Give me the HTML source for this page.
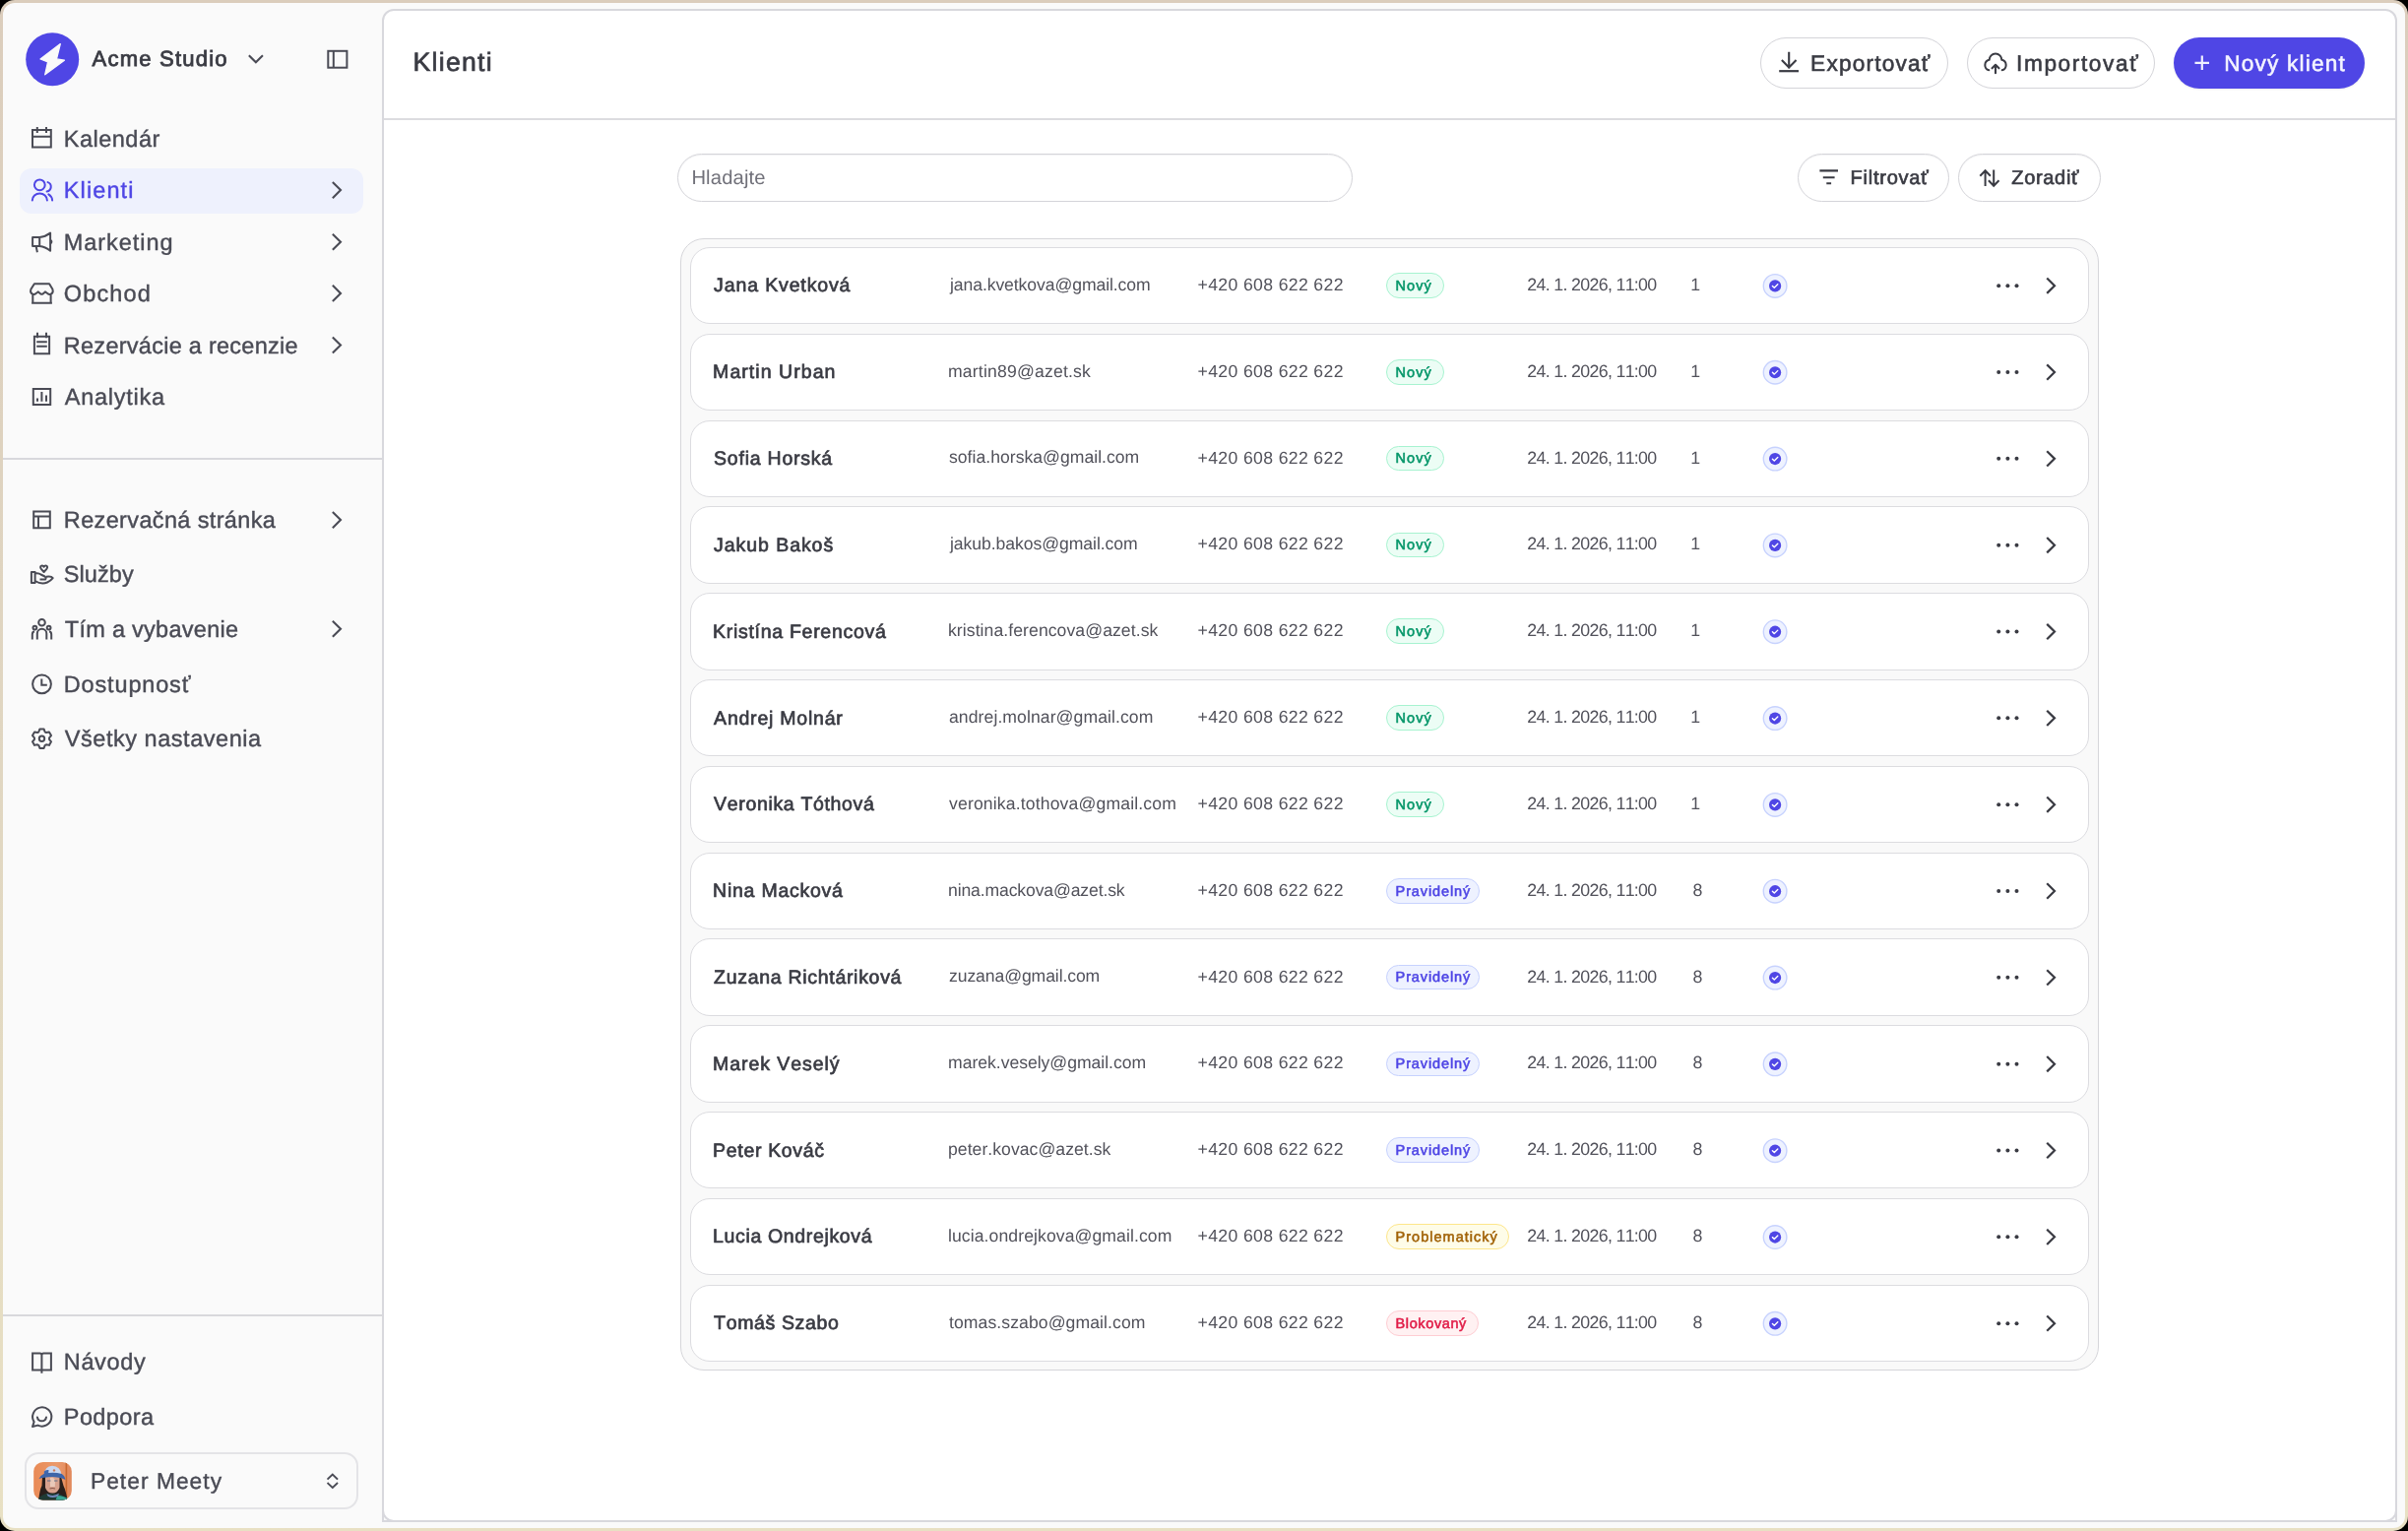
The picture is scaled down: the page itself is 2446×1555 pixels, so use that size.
<!DOCTYPE html>
<html><head><meta charset="utf-8">
<style>
*{box-sizing:border-box;margin:0;padding:0}
html,body{width:2446px;height:1555px;overflow:hidden;background:#000;font-family:"Liberation Sans",sans-serif;text-rendering:geometricPrecision}
.wrap{position:absolute;left:0;top:0;width:2446px;height:1555px;will-change:transform}
.frame{position:absolute;left:0;top:0;width:2446px;height:1555px;border-radius:15px;background:linear-gradient(180deg,#dbcdbc 0%,#e0d6c1 50%,#e8e0c3 100%)}
.app{position:absolute;left:3px;top:3px;width:2440px;height:1549px;border-radius:12px;background:#fafafa}
.t{position:absolute;white-space:nowrap;font-kerning:none}
.b{position:absolute}
svg{position:absolute;overflow:visible}
.nav{font-size:23.5px;line-height:23.5px;letter-spacing:0.27px;color:#4a4b55;-webkit-text-stroke:0.25px currentColor}
</style></head>
<body><div class="wrap">
<div class="frame"></div><div class="app"></div>
<svg style="left:26px;top:33px;" width="54" height="54" viewBox="26 33 54 54"><circle cx="53.2" cy="60.2" r="27" fill="#4f46e5"/><path d="M61.3 44.6 L57.5 59.9 L65.4 61.2 L45.7 75.8 L48.6 62.9 L41 60 Z" fill="#fafafa" stroke="#fafafa" stroke-width="1.3" stroke-linejoin="round"/></svg>
<div class="t" style="left:93.50px;top:49.40px;font-size:22.09px;line-height:22.09px;letter-spacing:1.191px;color:#3a3b43;font-weight:400;-webkit-text-stroke:0.8px #3a3b43">Acme Studio</div>
<svg style="left:250px;top:52px;" width="20" height="16" viewBox="250 52 20 16"><path d="M253.6 57 L259.9 63.3 L266.2 57" fill="none" stroke="#4a4b55" stroke-width="2.1" stroke-linecap="square" stroke-linejoin="miter"/></svg>
<svg style="left:330px;top:48px;" width="26" height="24" viewBox="330 48 26 24"><rect x="333.3" y="51.8" width="19.1" height="16.9" fill="none" stroke="#4a4b55" stroke-width="2" /><line x1="338.8" y1="52" x2="338.8" y2="68.5" fill="none" stroke="#4a4b55" stroke-width="2"/></svg>
<div class="b" style="left:20px;top:171px;width:349px;height:46px;background:#eef1fd;border-radius:12px"></div>
<div class="t" style="left:64.80px;top:130.31px;font-size:23.50px;line-height:23.50px;letter-spacing:0.494px;color:#4a4b55;font-weight:400;-webkit-text-stroke:0.4px #4a4b55">Kalendár</div>
<div class="t" style="left:64.80px;top:182.21px;font-size:23.50px;line-height:23.50px;letter-spacing:1.103px;color:#4f46e5;font-weight:400;-webkit-text-stroke:0.4px #4f46e5">Klienti</div>
<svg style="left:334px;top:182px;" width="18" height="22" viewBox="334 182 18 22"><path d="M338.6 185.8 L346 193.1 L338.6 200.4" fill="none" stroke="#4a4b55" stroke-width="2.1" stroke-linecap="square"/></svg>
<div class="t" style="left:64.80px;top:234.91px;font-size:23.50px;line-height:23.50px;letter-spacing:0.949px;color:#4a4b55;font-weight:400;-webkit-text-stroke:0.4px #4a4b55">Marketing</div>
<svg style="left:334px;top:234px;" width="18" height="22" viewBox="334 234 18 22"><path d="M338.6 238.5 L346 245.8 L338.6 253.1" fill="none" stroke="#4a4b55" stroke-width="2.1" stroke-linecap="square"/></svg>
<div class="t" style="left:64.80px;top:287.01px;font-size:23.50px;line-height:23.50px;letter-spacing:1.132px;color:#4a4b55;font-weight:400;-webkit-text-stroke:0.4px #4a4b55">Obchod</div>
<svg style="left:334px;top:286px;" width="18" height="22" viewBox="334 286 18 22"><path d="M338.6 290.6 L346 297.9 L338.6 305.2" fill="none" stroke="#4a4b55" stroke-width="2.1" stroke-linecap="square"/></svg>
<div class="t" style="left:64.80px;top:339.61px;font-size:23.50px;line-height:23.50px;letter-spacing:0.264px;color:#4a4b55;font-weight:400;-webkit-text-stroke:0.4px #4a4b55">Rezervácie a recenzie</div>
<svg style="left:334px;top:339px;" width="18" height="22" viewBox="334 339 18 22"><path d="M338.6 343.2 L346 350.5 L338.6 357.8" fill="none" stroke="#4a4b55" stroke-width="2.1" stroke-linecap="square"/></svg>
<div class="t" style="left:65.80px;top:391.71px;font-size:23.50px;line-height:23.50px;letter-spacing:0.727px;color:#4a4b55;font-weight:400;-webkit-text-stroke:0.4px #4a4b55">Analytika</div>
<svg style="left:28px;top:126px;" width="28" height="28" viewBox="28 126 28 28"><path d="M33 132 H51.8 V149.6 H33 Z M33 138.8 H51.8 M37.8 129 V135 M47 129 V135" fill="none" stroke="#4a4b55" stroke-width="2" /></svg>
<svg style="left:28px;top:178px;" width="30" height="30" viewBox="28 178 30 30"><circle cx="40.3" cy="187.8" r="5.4" fill="none" stroke="#4f46e5" stroke-width="2"/><path d="M32.8 203.5 A7.55 7 0 0 1 47.9 203.5" fill="none" stroke="#4f46e5" stroke-width="2" stroke-linecap="round"/><path d="M48.5 185.1 A4.8 4.8 0 0 1 47.6 194.4" fill="none" stroke="#4f46e5" stroke-width="2" stroke-linecap="round"/><path d="M49.3 197.4 Q52.9 199.6 53.1 203.5" fill="none" stroke="#4f46e5" stroke-width="2" stroke-linecap="round"/></svg>
<svg style="left:28px;top:232px;" width="30" height="28" viewBox="28 232 30 28"><path d="M33.1 241 H40.2 V250 H33.1 Z M40.2 241 Q46 240.5 51.1 236.6 V254.8 Q46 250.5 40.2 250 M36.6 250 L37.9 256.2 M51.5 244 Q53.3 245.5 51.5 247.3" fill="none" stroke="#4a4b55" stroke-width="2" stroke-linejoin="round"/></svg>
<svg style="left:28px;top:284px;" width="30" height="28" viewBox="28 284 30 28"><path d="M34.9 288.3 H50.1 L53.4 293.8 Q54.6 297.8 51.2 298.9 Q49.6 299.3 48.2 298 L45.9 296.4 L43.6 298.4 Q42.4 299.2 41.2 298.4 L38.9 296.4 L36.6 298 Q35.2 299.3 33.6 298.9 Q30.2 297.8 31.4 293.8 Z M33.3 298.8 V307.8 M51.6 298.8 V307.8 M32.1 307.8 H52.9" fill="none" stroke="#4a4b55" stroke-width="2" stroke-linejoin="round"/></svg>
<svg style="left:28px;top:334px;" width="30" height="30" viewBox="28 334 30 30"><path d="M34.9 341.8 H50.1 V359.3 H34.9 Z M38 337.8 V343.3 M47 337.8 V343.3 M37.2 347.2 H47.8 M37.2 351.7 H47.8" fill="none" stroke="#4a4b55" stroke-width="2" /></svg>
<svg style="left:28px;top:388px;" width="30" height="30" viewBox="28 388 30 30"><path d="M33.8 394.9 H51.2 V411 H33.8 Z M38 404.4 V407.8 M42.4 398 V407.8 M47 401.4 V407.8" fill="none" stroke="#4a4b55" stroke-width="2" /></svg>
<div class="b" style="left:3px;top:465px;width:385px;height:2px;background:#d8d8dc"></div>
<div class="t" style="left:64.80px;top:517.21px;font-size:23.50px;line-height:23.50px;letter-spacing:0.358px;color:#4a4b55;font-weight:400;-webkit-text-stroke:0.4px #4a4b55">Rezervačná stránka</div>
<svg style="left:334px;top:517px;" width="18" height="22" viewBox="334 517 18 22"><path d="M338.6 520.8 L346 528.1 L338.6 535.4" fill="none" stroke="#4a4b55" stroke-width="2.1" stroke-linecap="square"/></svg>
<div class="t" style="left:64.80px;top:572.31px;font-size:23.50px;line-height:23.50px;letter-spacing:0.063px;color:#4a4b55;font-weight:400;-webkit-text-stroke:0.4px #4a4b55">Služby</div>
<div class="t" style="left:65.80px;top:627.91px;font-size:23.50px;line-height:23.50px;letter-spacing:0.276px;color:#4a4b55;font-weight:400;-webkit-text-stroke:0.4px #4a4b55">Tím a vybavenie</div>
<svg style="left:334px;top:627px;" width="18" height="22" viewBox="334 627 18 22"><path d="M338.6 631.5 L346 638.8 L338.6 646.1" fill="none" stroke="#4a4b55" stroke-width="2.1" stroke-linecap="square"/></svg>
<div class="t" style="left:64.80px;top:683.61px;font-size:23.50px;line-height:23.50px;letter-spacing:0.839px;color:#4a4b55;font-weight:400;-webkit-text-stroke:0.4px #4a4b55">Dostupnosť</div>
<div class="t" style="left:65.80px;top:739.11px;font-size:23.50px;line-height:23.50px;letter-spacing:0.534px;color:#4a4b55;font-weight:400;-webkit-text-stroke:0.4px #4a4b55">Všetky nastavenia</div>
<svg style="left:28px;top:514px;" width="28" height="28" viewBox="28 514 28 28"><path d="M34.2 519.4 H50.8 V536.3 H34.2 Z M34.2 524.6 H50.8 M39 524.6 V536.3" fill="none" stroke="#4a4b55" stroke-width="2" /></svg>
<svg style="left:28px;top:568px;" width="30" height="30" viewBox="28 568 30 30"><path d="M31.9 581.1 H35.6 V591.9 H31.9 Z M35.6 582.5 Q39 581.5 41.5 583.5 L45.5 585.5 Q47.5 587 46 588.6 H40.5 M35.6 590 Q42 594 48 591.5 Q51.5 590 53.7 587.2 Q52 584.8 47 585.8 M44.6 581 L41.8 577.8 Q40.2 575.5 42.2 574.6 Q43.6 574 44.6 575.6 Q45.6 574 47 574.6 Q49 575.5 47.4 577.8 Z" fill="none" stroke="#4a4b55" stroke-width="2" stroke-linejoin="round"/></svg>
<svg style="left:28px;top:624px;" width="30" height="30" viewBox="28 624 30 30"><circle cx="42.5" cy="632.3" r="3.3" fill="none" stroke="#4a4b55" stroke-width="2"/><circle cx="35.4" cy="637.6" r="1.9" fill="none" stroke="#4a4b55" stroke-width="2"/><circle cx="49.6" cy="637.6" r="1.9" fill="none" stroke="#4a4b55" stroke-width="2"/><path d="M37.8 649.4 V643.5 A4.75 4.75 0 0 1 47.3 643.5 V649.4 M32.8 649.4 V644.5 Q32.8 641.6 35 641.2 M52.2 649.4 V644.5 Q52.2 641.6 50 641.2" fill="none" stroke="#4a4b55" stroke-width="2" stroke-linecap="butt"/></svg>
<svg style="left:28px;top:682px;" width="30" height="30" viewBox="28 682 30 30"><circle cx="42.5" cy="694.8" r="9.4" fill="none" stroke="#4a4b55" stroke-width="2"/><path d="M42.3 689.6 V695.8 H47.8" fill="none" stroke="#4a4b55" stroke-width="2" /></svg>
<svg style="left:28px;top:736px;" width="30" height="30" viewBox="28 736 30 30"><path d="M39.41 743.26 L40.42 740.42 L44.58 740.42 L45.59 743.26 L46.97 744.05 L49.93 743.51 L52.01 747.11 L50.06 749.41 L50.06 750.99 L52.01 753.29 L49.93 756.89 L46.97 756.35 L45.59 757.14 L44.58 759.98 L40.42 759.98 L39.41 757.14 L38.03 756.35 L35.07 756.89 L32.99 753.29 L34.94 750.99 L34.94 749.41 L32.99 747.11 L35.07 743.51 L38.03 744.05 Z" fill="none" stroke="#4a4b55" stroke-width="2" stroke-linejoin="round"/><circle cx="42.5" cy="750.2" r="2.7" fill="none" stroke="#4a4b55" stroke-width="2"/></svg>
<div class="b" style="left:3px;top:1335px;width:385px;height:2px;background:#d8d8dc"></div>
<div class="t" style="left:64.80px;top:1372.41px;font-size:23.50px;line-height:23.50px;letter-spacing:0.634px;color:#4a4b55;font-weight:400;-webkit-text-stroke:0.4px #4a4b55">Návody</div>
<div class="t" style="left:64.80px;top:1428.11px;font-size:23.50px;line-height:23.50px;letter-spacing:0.404px;color:#4a4b55;font-weight:400;-webkit-text-stroke:0.4px #4a4b55">Podpora</div>
<svg style="left:28px;top:1368px;" width="30" height="30" viewBox="28 1368 30 30"><path d="M33.1 1374.5 H40.5 Q42.4 1374.5 42.4 1376.5 Q42.4 1374.5 44.3 1374.5 H51.9 V1391.6 H33.1 Z M42.4 1376.5 V1394.7" fill="none" stroke="#4a4b55" stroke-width="2" stroke-linejoin="miter"/></svg>
<svg style="left:28px;top:1424px;" width="30" height="30" viewBox="28 1424 30 30"><path d="M34.6 1444.1 A9.6 9.6 0 1 1 38.5 1447.6 L33 1449 Z" fill="none" stroke="#4a4b55" stroke-width="2" stroke-linejoin="round"/><path d="M37.9 1439.4 A4.6 4.6 0 0 0 47 1439.4" fill="none" stroke="#4a4b55" stroke-width="2" stroke-linecap="round"/></svg>
<div class="b" style="left:25px;top:1475px;width:339px;height:58px;border:2px solid #e4e4e7;border-radius:14px;background:#fafafa"></div>
<svg style="left:34px;top:1484px;" width="40" height="40" viewBox="34 1484 40 40"><defs><clipPath id="av"><rect x="34.2" y="1484.9" width="38.6" height="38.6" rx="9.5"/></clipPath><linearGradient id="avbg" x1="0" x2="1" y1="0" y2="0"><stop offset="0" stop-color="#e98a55"/><stop offset="0.6" stop-color="#eb9a6c"/><stop offset="1" stop-color="#e08659"/></linearGradient></defs><g clip-path="url(#av)"><rect x="34" y="1484" width="40" height="41" fill="url(#avbg)"/><rect x="66.6" y="1484" width="1.6" height="41" fill="#c9672f"/><path d="M39 1526 Q40 1514 42.5 1509 L43 1500 L62 1500 L64.5 1509 Q67 1514 69 1526 Z" fill="#2a1f1b"/><path d="M46 1500 L60.5 1500 L60.5 1511 Q58.5 1516.5 53.5 1516.5 Q48 1516.5 46 1511 Z" fill="#d7a18d"/><path d="M51 1501 Q54 1500 56 1503 L55.8 1510 L51 1510 Z" fill="#e9c9b9"/><path d="M48 1504 L51.5 1504 M55 1504 L58.5 1504" stroke="#5f6f86" stroke-width="1"/><path d="M50.5 1512 Q53.3 1511 56 1512" stroke="#8a5a4c" stroke-width="1.2" fill="none"/><path d="M36 1526 Q40 1519 47 1517 L60 1517 Q66 1519 72 1526 Z" fill="#1f3a34"/><path d="M56 1526 L58 1519 Q65 1519 72 1524 L72 1526 Z" fill="#3aa593"/><path d="M47.5 1517 Q53.5 1521 60 1516.8 L59 1519.5 Q53.5 1522.5 48.5 1519.5 Z" fill="#6f86b8"/><path d="M44.8 1498 Q45.5 1489 53 1488.8 Q61.5 1489 62.5 1498 Z" fill="#c9d8f1"/><path d="M44.8 1494.5 Q46 1492.5 49.5 1493 L49 1498 L44.8 1498 Z" fill="#3f68b0"/><path d="M39.5 1502 Q41 1498.5 44.5 1497 Q53.5 1494.5 62.8 1497 Q66 1499 66.4 1503 Q63 1500.5 53.5 1500 Q44 1500.5 39.5 1502 Z" fill="#3d65a9"/><circle cx="55" cy="1493.4" r="1.2" fill="#c77a5a"/></g></svg>
<div class="t" style="left:91.90px;top:1493.08px;font-size:22.82px;line-height:22.82px;letter-spacing:1.022px;color:#4a4b55;font-weight:400;-webkit-text-stroke:0.4px #4a4b55">Peter Meety</div>
<svg style="left:330px;top:1494px;" width="16" height="20" viewBox="330 1494 16 20"><path d="M333.2 1502 L337.8 1497.6 L342.4 1502 M333.2 1506.6 L337.8 1511 L342.4 1506.6" fill="none" stroke="#4a4b55" stroke-width="1.8" stroke-linecap="square"/></svg>
<div class="b" style="left:388px;top:9px;width:2047px;height:1537px;border:2px solid #d8d8dd;border-radius:12px;background:#fff"></div>
<div class="b" style="left:388px;top:1530px;width:16px;height:16px;border-left:2px solid #d8d8dd;border-bottom:2px solid #d8d8dd"></div>
<div class="b" style="left:2419px;top:1530px;width:16px;height:16px;border-right:2px solid #d8d8dd;border-bottom:2px solid #d8d8dd"></div>
<div class="b" style="left:390px;top:120px;width:2043px;height:2px;background:#dcdce0"></div>
<div class="t" style="left:419.50px;top:49.58px;font-size:26.60px;line-height:26.60px;letter-spacing:1.286px;color:#3a3b43;font-weight:400;-webkit-text-stroke:0.7px #3a3b43">Klienti</div>
<div class="b" style="left:1788px;top:38px;width:191px;height:52px;border:1.5px solid #d4d4d9;border-radius:26px;background:#fff"></div>
<svg style="left:1804px;top:50px;" width="26" height="26" viewBox="1804 50 26 26"><path d="M1817.2 53.7 V68.5 M1810.6 61.8 L1817.2 68.4 L1823.8 61.8" fill="none" stroke="#3a3b43" stroke-width="2.1" stroke-linecap="square"/><path d="M1807.2 72.2 H1827" fill="none" stroke="#3a3b43" stroke-width="2.2"/></svg>
<div class="t" style="left:1839.10px;top:53.31px;font-size:22.67px;line-height:22.67px;letter-spacing:1.177px;color:#3a3b43;font-weight:400;-webkit-text-stroke:0.6px #3a3b43">Exportovať</div>
<div class="b" style="left:1998px;top:38px;width:191px;height:52px;border:1.5px solid #d4d4d9;border-radius:26px;background:#fff"></div>
<svg style="left:2012px;top:50px;" width="30" height="28" viewBox="2012 50 30 28"><path d="M2020.3 71.3 A5.4 5.4 0 0 1 2020.7 60.8 A6.3 6.3 0 0 1 2033.3 60.8 A5.4 5.4 0 0 1 2033.7 71.3" fill="none" stroke="#3a3b43" stroke-width="2" stroke-linecap="round" stroke-linejoin="round"/><path d="M2027 74.2 V65.8 M2023.5 69.3 L2027 65.8 L2030.5 69.3" fill="none" stroke="#3a3b43" stroke-width="2.1" stroke-linecap="round" stroke-linejoin="round"/></svg>
<div class="t" style="left:2048.00px;top:53.31px;font-size:22.67px;line-height:22.67px;letter-spacing:1.607px;color:#3a3b43;font-weight:400;-webkit-text-stroke:0.6px #3a3b43">Importovať</div>
<div class="b" style="left:2208px;top:38px;width:194px;height:52px;border-radius:26px;background:#4f46e5;box-shadow:0 1px 2px rgba(0,0,0,0.08)"></div>
<svg style="left:2226px;top:52px;" width="22" height="22" viewBox="2226 52 22 22"><path d="M2236.8 56.5 V71 M2229.5 63.8 H2244" fill="none" stroke="#eef0ff" stroke-width="2.2" /></svg>
<div class="t" style="left:2259.30px;top:53.31px;font-size:22.67px;line-height:22.67px;letter-spacing:1.169px;color:#f4f4ff;font-weight:400;-webkit-text-stroke:0.55px #f4f4ff">Nový klient</div>
<div class="b" style="left:688px;top:156px;width:686px;height:49px;border:1.2px solid #d4d4d9;border-radius:25px;background:#fff;box-shadow:inset 0 1px 0 #f3f3f4"></div>
<div class="t" style="left:702.40px;top:170.70px;font-size:20.20px;line-height:20.20px;letter-spacing:0.151px;color:#71717a;font-weight:400;">Hladajte</div>
<div class="b" style="left:1826px;top:156px;width:154px;height:49px;border:1.2px solid #d4d4d9;border-radius:25px;background:#fff;box-shadow:inset 0 1px 0 #f3f3f4"></div>
<svg style="left:1845px;top:165px;" width="26" height="26" viewBox="1845 165 26 26"><path d="M1848.4 173.4 H1867 M1851.8 180.2 H1863.6 M1855.3 186.3 H1860.1" fill="none" stroke="#3a3b43" stroke-width="2.1" /></svg>
<div class="t" style="left:1879.50px;top:171.02px;font-size:20.06px;line-height:20.06px;letter-spacing:0.747px;color:#3a3b43;font-weight:400;-webkit-text-stroke:0.65px #3a3b43">Filtrovať</div>
<div class="b" style="left:1989px;top:156px;width:145px;height:49px;border:1.2px solid #d4d4d9;border-radius:25px;background:#fff;box-shadow:inset 0 1px 0 #f3f3f4"></div>
<svg style="left:2008px;top:165px;" width="26" height="26" viewBox="2008 165 26 26"><path d="M2016.6 189 V173.3 M2011.3 178.7 L2016.6 173.3 L2021.9 178.7 M2025.2 172.5 V188.7 M2019.9 183.3 L2025.2 188.7 L2030.5 183.3" fill="none" stroke="#3a3b43" stroke-width="2.0" /></svg>
<div class="t" style="left:2043.30px;top:171.02px;font-size:20.06px;line-height:20.06px;letter-spacing:0.646px;color:#3a3b43;font-weight:400;-webkit-text-stroke:0.65px #3a3b43">Zoradiť</div>
<div class="b" style="left:690.75px;top:241.85px;width:1441.1px;height:1150.4px;border:1.3px solid #d6d6da;border-radius:24px;background:#f9f9f9"></div>
<div class="b" style="left:700.5px;top:251.05px;width:1421.65px;height:78.35px;border:1.5px solid #dcdce0;border-radius:20px;background:#fff"></div>
<div class="t" style="left:725.10px;top:281.36px;font-size:19.53px;line-height:19.53px;letter-spacing:0.862px;color:#3a3b43;font-weight:400;-webkit-text-stroke:0.7px #3a3b43">Jana Kvetková</div>
<div class="t" style="left:965.00px;top:280.80px;font-size:17.60px;line-height:17.60px;letter-spacing:-0.089px;color:#52525b;font-weight:400;">jana.kvetkova@gmail.com</div>
<div class="t" style="left:1216.50px;top:280.98px;font-size:17.62px;line-height:17.62px;letter-spacing:0.000px;color:#52525b;font-weight:400;letter-spacing:0.367px">+420 608 622 622</div>
<div class="b" style="left:1408.4px;top:277.1px;width:58.7px;height:25.7px;border:1.6px solid #a7f3d0;border-radius:13px;background:#ecfdf5"></div>
<div class="t" style="left:1417.60px;top:283.80px;font-size:14.53px;line-height:14.53px;letter-spacing:1.029px;color:#059669;font-weight:400;-webkit-text-stroke:0.55px #059669">Nový</div>
<div class="t" style="left:1551.30px;top:280.86px;font-size:17.77px;line-height:17.77px;letter-spacing:0.000px;color:#52525b;font-weight:400;letter-spacing:-0.666px">24. 1. 2026, 11:00</div>
<div class="t" style="left:1717.30px;top:280.86px;font-size:17.77px;line-height:17.77px;letter-spacing:0.000px;color:#52525b;font-weight:400;">1</div>
<svg style="left:1789px;top:276px;" width="28" height="28" viewBox="1789 276 28 28"><circle cx="1803.1" cy="290.40" r="11.8" fill="#eef2ff" stroke="#c7d2fe" stroke-width="1.4"/><circle cx="1803.1" cy="290.40" r="6.1" fill="#4f46e5"/><path d="M1800.4 290.50 L1802.3 292.30 L1805.8 288.80" fill="none" stroke="#fff" stroke-width="1.4" stroke-linecap="round" stroke-linejoin="round"/></svg>
<svg style="left:2024px;top:280px;" width="30" height="20" viewBox="2024 280 30 20"><circle cx="2030.2" cy="290.20" r="2" fill="#3a3b43"/><circle cx="2039.4" cy="290.20" r="2" fill="#3a3b43"/><circle cx="2048.5" cy="290.20" r="2" fill="#3a3b43"/></svg>
<svg style="left:2074px;top:279px;" width="20" height="22" viewBox="2074 279 20 22"><path d="M2080 283.30 L2087 290.20 L2080 297.10" fill="none" stroke="#3a3b43" stroke-width="2.2" stroke-linecap="square"/></svg>
<div class="b" style="left:700.5px;top:338.85px;width:1421.65px;height:78.35px;border:1.5px solid #dcdce0;border-radius:20px;background:#fff"></div>
<div class="t" style="left:724.10px;top:369.19px;font-size:19.53px;line-height:19.53px;letter-spacing:1.051px;color:#3a3b43;font-weight:400;-webkit-text-stroke:0.7px #3a3b43">Martin Urban</div>
<div class="t" style="left:963.00px;top:368.63px;font-size:17.60px;line-height:17.60px;letter-spacing:0.190px;color:#52525b;font-weight:400;">martin89@azet.sk</div>
<div class="t" style="left:1216.50px;top:368.81px;font-size:17.62px;line-height:17.62px;letter-spacing:0.000px;color:#52525b;font-weight:400;letter-spacing:0.367px">+420 608 622 622</div>
<div class="b" style="left:1408.4px;top:364.9px;width:58.7px;height:25.7px;border:1.6px solid #a7f3d0;border-radius:13px;background:#ecfdf5"></div>
<div class="t" style="left:1417.60px;top:371.63px;font-size:14.53px;line-height:14.53px;letter-spacing:1.029px;color:#059669;font-weight:400;-webkit-text-stroke:0.55px #059669">Nový</div>
<div class="t" style="left:1551.30px;top:368.69px;font-size:17.77px;line-height:17.77px;letter-spacing:0.000px;color:#52525b;font-weight:400;letter-spacing:-0.666px">24. 1. 2026, 11:00</div>
<div class="t" style="left:1717.30px;top:368.69px;font-size:17.77px;line-height:17.77px;letter-spacing:0.000px;color:#52525b;font-weight:400;">1</div>
<svg style="left:1789px;top:364px;" width="28" height="28" viewBox="1789 364 28 28"><circle cx="1803.1" cy="378.23" r="11.8" fill="#eef2ff" stroke="#c7d2fe" stroke-width="1.4"/><circle cx="1803.1" cy="378.23" r="6.1" fill="#4f46e5"/><path d="M1800.4 378.33 L1802.3 380.13 L1805.8 376.63" fill="none" stroke="#fff" stroke-width="1.4" stroke-linecap="round" stroke-linejoin="round"/></svg>
<svg style="left:2024px;top:368px;" width="30" height="20" viewBox="2024 368 30 20"><circle cx="2030.2" cy="378.03" r="2" fill="#3a3b43"/><circle cx="2039.4" cy="378.03" r="2" fill="#3a3b43"/><circle cx="2048.5" cy="378.03" r="2" fill="#3a3b43"/></svg>
<svg style="left:2074px;top:367px;" width="20" height="22" viewBox="2074 367 20 22"><path d="M2080 371.13 L2087 378.03 L2080 384.93" fill="none" stroke="#3a3b43" stroke-width="2.2" stroke-linecap="square"/></svg>
<div class="b" style="left:700.5px;top:426.65px;width:1421.65px;height:78.35px;border:1.5px solid #dcdce0;border-radius:20px;background:#fff"></div>
<div class="t" style="left:725.10px;top:457.02px;font-size:19.53px;line-height:19.53px;letter-spacing:0.758px;color:#3a3b43;font-weight:400;-webkit-text-stroke:0.7px #3a3b43">Sofia Horská</div>
<div class="t" style="left:964.00px;top:456.46px;font-size:17.60px;line-height:17.60px;letter-spacing:0.018px;color:#52525b;font-weight:400;">sofia.horska@gmail.com</div>
<div class="t" style="left:1216.50px;top:456.64px;font-size:17.62px;line-height:17.62px;letter-spacing:0.000px;color:#52525b;font-weight:400;letter-spacing:0.367px">+420 608 622 622</div>
<div class="b" style="left:1408.4px;top:452.8px;width:58.7px;height:25.7px;border:1.6px solid #a7f3d0;border-radius:13px;background:#ecfdf5"></div>
<div class="t" style="left:1417.60px;top:459.46px;font-size:14.53px;line-height:14.53px;letter-spacing:1.029px;color:#059669;font-weight:400;-webkit-text-stroke:0.55px #059669">Nový</div>
<div class="t" style="left:1551.30px;top:456.52px;font-size:17.77px;line-height:17.77px;letter-spacing:0.000px;color:#52525b;font-weight:400;letter-spacing:-0.666px">24. 1. 2026, 11:00</div>
<div class="t" style="left:1717.30px;top:456.52px;font-size:17.77px;line-height:17.77px;letter-spacing:0.000px;color:#52525b;font-weight:400;">1</div>
<svg style="left:1789px;top:452px;" width="28" height="28" viewBox="1789 452 28 28"><circle cx="1803.1" cy="466.06" r="11.8" fill="#eef2ff" stroke="#c7d2fe" stroke-width="1.4"/><circle cx="1803.1" cy="466.06" r="6.1" fill="#4f46e5"/><path d="M1800.4 466.16 L1802.3 467.96 L1805.8 464.46" fill="none" stroke="#fff" stroke-width="1.4" stroke-linecap="round" stroke-linejoin="round"/></svg>
<svg style="left:2024px;top:455px;" width="30" height="20" viewBox="2024 455 30 20"><circle cx="2030.2" cy="465.86" r="2" fill="#3a3b43"/><circle cx="2039.4" cy="465.86" r="2" fill="#3a3b43"/><circle cx="2048.5" cy="465.86" r="2" fill="#3a3b43"/></svg>
<svg style="left:2074px;top:454px;" width="20" height="22" viewBox="2074 454 20 22"><path d="M2080 458.96 L2087 465.86 L2080 472.76" fill="none" stroke="#3a3b43" stroke-width="2.2" stroke-linecap="square"/></svg>
<div class="b" style="left:700.5px;top:514.45px;width:1421.65px;height:78.35px;border:1.5px solid #dcdce0;border-radius:20px;background:#fff"></div>
<div class="t" style="left:725.10px;top:544.85px;font-size:19.53px;line-height:19.53px;letter-spacing:0.932px;color:#3a3b43;font-weight:400;-webkit-text-stroke:0.7px #3a3b43">Jakub Bakoš</div>
<div class="t" style="left:965.00px;top:544.29px;font-size:17.60px;line-height:17.60px;letter-spacing:-0.063px;color:#52525b;font-weight:400;">jakub.bakos@gmail.com</div>
<div class="t" style="left:1216.50px;top:544.47px;font-size:17.62px;line-height:17.62px;letter-spacing:0.000px;color:#52525b;font-weight:400;letter-spacing:0.367px">+420 608 622 622</div>
<div class="b" style="left:1408.4px;top:540.6px;width:58.7px;height:25.7px;border:1.6px solid #a7f3d0;border-radius:13px;background:#ecfdf5"></div>
<div class="t" style="left:1417.60px;top:547.29px;font-size:14.53px;line-height:14.53px;letter-spacing:1.029px;color:#059669;font-weight:400;-webkit-text-stroke:0.55px #059669">Nový</div>
<div class="t" style="left:1551.30px;top:544.35px;font-size:17.77px;line-height:17.77px;letter-spacing:0.000px;color:#52525b;font-weight:400;letter-spacing:-0.666px">24. 1. 2026, 11:00</div>
<div class="t" style="left:1717.30px;top:544.35px;font-size:17.77px;line-height:17.77px;letter-spacing:0.000px;color:#52525b;font-weight:400;">1</div>
<svg style="left:1789px;top:539px;" width="28" height="28" viewBox="1789 539 28 28"><circle cx="1803.1" cy="553.89" r="11.8" fill="#eef2ff" stroke="#c7d2fe" stroke-width="1.4"/><circle cx="1803.1" cy="553.89" r="6.1" fill="#4f46e5"/><path d="M1800.4 553.99 L1802.3 555.79 L1805.8 552.29" fill="none" stroke="#fff" stroke-width="1.4" stroke-linecap="round" stroke-linejoin="round"/></svg>
<svg style="left:2024px;top:543px;" width="30" height="20" viewBox="2024 543 30 20"><circle cx="2030.2" cy="553.69" r="2" fill="#3a3b43"/><circle cx="2039.4" cy="553.69" r="2" fill="#3a3b43"/><circle cx="2048.5" cy="553.69" r="2" fill="#3a3b43"/></svg>
<svg style="left:2074px;top:542px;" width="20" height="22" viewBox="2074 542 20 22"><path d="M2080 546.79 L2087 553.69 L2080 560.59" fill="none" stroke="#3a3b43" stroke-width="2.2" stroke-linecap="square"/></svg>
<div class="b" style="left:700.5px;top:602.25px;width:1421.65px;height:78.35px;border:1.5px solid #dcdce0;border-radius:20px;background:#fff"></div>
<div class="t" style="left:724.10px;top:632.68px;font-size:19.53px;line-height:19.53px;letter-spacing:0.698px;color:#3a3b43;font-weight:400;-webkit-text-stroke:0.7px #3a3b43">Kristína Ferencová</div>
<div class="t" style="left:963.00px;top:632.12px;font-size:17.60px;line-height:17.60px;letter-spacing:0.073px;color:#52525b;font-weight:400;">kristina.ferencova@azet.sk</div>
<div class="t" style="left:1216.50px;top:632.30px;font-size:17.62px;line-height:17.62px;letter-spacing:0.000px;color:#52525b;font-weight:400;letter-spacing:0.367px">+420 608 622 622</div>
<div class="b" style="left:1408.4px;top:628.4px;width:58.7px;height:25.7px;border:1.6px solid #a7f3d0;border-radius:13px;background:#ecfdf5"></div>
<div class="t" style="left:1417.60px;top:635.12px;font-size:14.53px;line-height:14.53px;letter-spacing:1.029px;color:#059669;font-weight:400;-webkit-text-stroke:0.55px #059669">Nový</div>
<div class="t" style="left:1551.30px;top:632.18px;font-size:17.77px;line-height:17.77px;letter-spacing:0.000px;color:#52525b;font-weight:400;letter-spacing:-0.666px">24. 1. 2026, 11:00</div>
<div class="t" style="left:1717.30px;top:632.18px;font-size:17.77px;line-height:17.77px;letter-spacing:0.000px;color:#52525b;font-weight:400;">1</div>
<svg style="left:1789px;top:627px;" width="28" height="28" viewBox="1789 627 28 28"><circle cx="1803.1" cy="641.72" r="11.8" fill="#eef2ff" stroke="#c7d2fe" stroke-width="1.4"/><circle cx="1803.1" cy="641.72" r="6.1" fill="#4f46e5"/><path d="M1800.4 641.82 L1802.3 643.62 L1805.8 640.12" fill="none" stroke="#fff" stroke-width="1.4" stroke-linecap="round" stroke-linejoin="round"/></svg>
<svg style="left:2024px;top:631px;" width="30" height="20" viewBox="2024 631 30 20"><circle cx="2030.2" cy="641.52" r="2" fill="#3a3b43"/><circle cx="2039.4" cy="641.52" r="2" fill="#3a3b43"/><circle cx="2048.5" cy="641.52" r="2" fill="#3a3b43"/></svg>
<svg style="left:2074px;top:630px;" width="20" height="22" viewBox="2074 630 20 22"><path d="M2080 634.62 L2087 641.52 L2080 648.42" fill="none" stroke="#3a3b43" stroke-width="2.2" stroke-linecap="square"/></svg>
<div class="b" style="left:700.5px;top:690.05px;width:1421.65px;height:78.35px;border:1.5px solid #dcdce0;border-radius:20px;background:#fff"></div>
<div class="t" style="left:725.10px;top:720.51px;font-size:19.53px;line-height:19.53px;letter-spacing:0.768px;color:#3a3b43;font-weight:400;-webkit-text-stroke:0.7px #3a3b43">Andrej Molnár</div>
<div class="t" style="left:964.00px;top:719.95px;font-size:17.60px;line-height:17.60px;letter-spacing:0.080px;color:#52525b;font-weight:400;">andrej.molnar@gmail.com</div>
<div class="t" style="left:1216.50px;top:720.13px;font-size:17.62px;line-height:17.62px;letter-spacing:0.000px;color:#52525b;font-weight:400;letter-spacing:0.367px">+420 608 622 622</div>
<div class="b" style="left:1408.4px;top:716.2px;width:58.7px;height:25.7px;border:1.6px solid #a7f3d0;border-radius:13px;background:#ecfdf5"></div>
<div class="t" style="left:1417.60px;top:722.95px;font-size:14.53px;line-height:14.53px;letter-spacing:1.029px;color:#059669;font-weight:400;-webkit-text-stroke:0.55px #059669">Nový</div>
<div class="t" style="left:1551.30px;top:720.01px;font-size:17.77px;line-height:17.77px;letter-spacing:0.000px;color:#52525b;font-weight:400;letter-spacing:-0.666px">24. 1. 2026, 11:00</div>
<div class="t" style="left:1717.30px;top:720.01px;font-size:17.77px;line-height:17.77px;letter-spacing:0.000px;color:#52525b;font-weight:400;">1</div>
<svg style="left:1789px;top:715px;" width="28" height="28" viewBox="1789 715 28 28"><circle cx="1803.1" cy="729.55" r="11.8" fill="#eef2ff" stroke="#c7d2fe" stroke-width="1.4"/><circle cx="1803.1" cy="729.55" r="6.1" fill="#4f46e5"/><path d="M1800.4 729.65 L1802.3 731.45 L1805.8 727.95" fill="none" stroke="#fff" stroke-width="1.4" stroke-linecap="round" stroke-linejoin="round"/></svg>
<svg style="left:2024px;top:719px;" width="30" height="20" viewBox="2024 719 30 20"><circle cx="2030.2" cy="729.35" r="2" fill="#3a3b43"/><circle cx="2039.4" cy="729.35" r="2" fill="#3a3b43"/><circle cx="2048.5" cy="729.35" r="2" fill="#3a3b43"/></svg>
<svg style="left:2074px;top:718px;" width="20" height="22" viewBox="2074 718 20 22"><path d="M2080 722.45 L2087 729.35 L2080 736.25" fill="none" stroke="#3a3b43" stroke-width="2.2" stroke-linecap="square"/></svg>
<div class="b" style="left:700.5px;top:777.85px;width:1421.65px;height:78.35px;border:1.5px solid #dcdce0;border-radius:20px;background:#fff"></div>
<div class="t" style="left:725.10px;top:808.34px;font-size:19.53px;line-height:19.53px;letter-spacing:0.651px;color:#3a3b43;font-weight:400;-webkit-text-stroke:0.7px #3a3b43">Veronika Tóthová</div>
<div class="t" style="left:964.00px;top:807.78px;font-size:17.60px;line-height:17.60px;letter-spacing:0.149px;color:#52525b;font-weight:400;">veronika.tothova@gmail.com</div>
<div class="t" style="left:1216.50px;top:807.96px;font-size:17.62px;line-height:17.62px;letter-spacing:0.000px;color:#52525b;font-weight:400;letter-spacing:0.367px">+420 608 622 622</div>
<div class="b" style="left:1408.4px;top:804.1px;width:58.7px;height:25.7px;border:1.6px solid #a7f3d0;border-radius:13px;background:#ecfdf5"></div>
<div class="t" style="left:1417.60px;top:810.78px;font-size:14.53px;line-height:14.53px;letter-spacing:1.029px;color:#059669;font-weight:400;-webkit-text-stroke:0.55px #059669">Nový</div>
<div class="t" style="left:1551.30px;top:807.84px;font-size:17.77px;line-height:17.77px;letter-spacing:0.000px;color:#52525b;font-weight:400;letter-spacing:-0.666px">24. 1. 2026, 11:00</div>
<div class="t" style="left:1717.30px;top:807.84px;font-size:17.77px;line-height:17.77px;letter-spacing:0.000px;color:#52525b;font-weight:400;">1</div>
<svg style="left:1789px;top:803px;" width="28" height="28" viewBox="1789 803 28 28"><circle cx="1803.1" cy="817.38" r="11.8" fill="#eef2ff" stroke="#c7d2fe" stroke-width="1.4"/><circle cx="1803.1" cy="817.38" r="6.1" fill="#4f46e5"/><path d="M1800.4 817.48 L1802.3 819.28 L1805.8 815.78" fill="none" stroke="#fff" stroke-width="1.4" stroke-linecap="round" stroke-linejoin="round"/></svg>
<svg style="left:2024px;top:807px;" width="30" height="20" viewBox="2024 807 30 20"><circle cx="2030.2" cy="817.18" r="2" fill="#3a3b43"/><circle cx="2039.4" cy="817.18" r="2" fill="#3a3b43"/><circle cx="2048.5" cy="817.18" r="2" fill="#3a3b43"/></svg>
<svg style="left:2074px;top:806px;" width="20" height="22" viewBox="2074 806 20 22"><path d="M2080 810.28 L2087 817.18 L2080 824.08" fill="none" stroke="#3a3b43" stroke-width="2.2" stroke-linecap="square"/></svg>
<div class="b" style="left:700.5px;top:865.65px;width:1421.65px;height:78.35px;border:1.5px solid #dcdce0;border-radius:20px;background:#fff"></div>
<div class="t" style="left:724.10px;top:896.17px;font-size:19.53px;line-height:19.53px;letter-spacing:0.746px;color:#3a3b43;font-weight:400;-webkit-text-stroke:0.7px #3a3b43">Nina Macková</div>
<div class="t" style="left:963.00px;top:895.61px;font-size:17.60px;line-height:17.60px;letter-spacing:-0.134px;color:#52525b;font-weight:400;">nina.mackova@azet.sk</div>
<div class="t" style="left:1216.50px;top:895.79px;font-size:17.62px;line-height:17.62px;letter-spacing:0.000px;color:#52525b;font-weight:400;letter-spacing:0.367px">+420 608 622 622</div>
<div class="b" style="left:1408.4px;top:891.9px;width:94.2px;height:25.7px;border:1.6px solid #c7d2fe;border-radius:13px;background:#eef2ff"></div>
<div class="t" style="left:1417.60px;top:898.61px;font-size:14.53px;line-height:14.53px;letter-spacing:0.876px;color:#4f46e5;font-weight:400;-webkit-text-stroke:0.55px #4f46e5">Pravidelný</div>
<div class="t" style="left:1551.30px;top:895.67px;font-size:17.77px;line-height:17.77px;letter-spacing:0.000px;color:#52525b;font-weight:400;letter-spacing:-0.666px">24. 1. 2026, 11:00</div>
<div class="t" style="left:1719.50px;top:895.67px;font-size:17.77px;line-height:17.77px;letter-spacing:0.000px;color:#52525b;font-weight:400;">8</div>
<svg style="left:1789px;top:891px;" width="28" height="28" viewBox="1789 891 28 28"><circle cx="1803.1" cy="905.21" r="11.8" fill="#eef2ff" stroke="#c7d2fe" stroke-width="1.4"/><circle cx="1803.1" cy="905.21" r="6.1" fill="#4f46e5"/><path d="M1800.4 905.31 L1802.3 907.11 L1805.8 903.61" fill="none" stroke="#fff" stroke-width="1.4" stroke-linecap="round" stroke-linejoin="round"/></svg>
<svg style="left:2024px;top:895px;" width="30" height="20" viewBox="2024 895 30 20"><circle cx="2030.2" cy="905.01" r="2" fill="#3a3b43"/><circle cx="2039.4" cy="905.01" r="2" fill="#3a3b43"/><circle cx="2048.5" cy="905.01" r="2" fill="#3a3b43"/></svg>
<svg style="left:2074px;top:894px;" width="20" height="22" viewBox="2074 894 20 22"><path d="M2080 898.11 L2087 905.01 L2080 911.91" fill="none" stroke="#3a3b43" stroke-width="2.2" stroke-linecap="square"/></svg>
<div class="b" style="left:700.5px;top:953.45px;width:1421.65px;height:78.35px;border:1.5px solid #dcdce0;border-radius:20px;background:#fff"></div>
<div class="t" style="left:725.10px;top:984.00px;font-size:19.53px;line-height:19.53px;letter-spacing:0.692px;color:#3a3b43;font-weight:400;-webkit-text-stroke:0.7px #3a3b43">Zuzana Richtáriková</div>
<div class="t" style="left:964.00px;top:983.44px;font-size:17.60px;line-height:17.60px;letter-spacing:-0.100px;color:#52525b;font-weight:400;">zuzana@gmail.com</div>
<div class="t" style="left:1216.50px;top:983.62px;font-size:17.62px;line-height:17.62px;letter-spacing:0.000px;color:#52525b;font-weight:400;letter-spacing:0.367px">+420 608 622 622</div>
<div class="b" style="left:1408.4px;top:979.7px;width:94.2px;height:25.7px;border:1.6px solid #c7d2fe;border-radius:13px;background:#eef2ff"></div>
<div class="t" style="left:1417.60px;top:986.44px;font-size:14.53px;line-height:14.53px;letter-spacing:0.876px;color:#4f46e5;font-weight:400;-webkit-text-stroke:0.55px #4f46e5">Pravidelný</div>
<div class="t" style="left:1551.30px;top:983.50px;font-size:17.77px;line-height:17.77px;letter-spacing:0.000px;color:#52525b;font-weight:400;letter-spacing:-0.666px">24. 1. 2026, 11:00</div>
<div class="t" style="left:1719.50px;top:983.50px;font-size:17.77px;line-height:17.77px;letter-spacing:0.000px;color:#52525b;font-weight:400;">8</div>
<svg style="left:1789px;top:979px;" width="28" height="28" viewBox="1789 979 28 28"><circle cx="1803.1" cy="993.04" r="11.8" fill="#eef2ff" stroke="#c7d2fe" stroke-width="1.4"/><circle cx="1803.1" cy="993.04" r="6.1" fill="#4f46e5"/><path d="M1800.4 993.14 L1802.3 994.94 L1805.8 991.44" fill="none" stroke="#fff" stroke-width="1.4" stroke-linecap="round" stroke-linejoin="round"/></svg>
<svg style="left:2024px;top:982px;" width="30" height="20" viewBox="2024 982 30 20"><circle cx="2030.2" cy="992.84" r="2" fill="#3a3b43"/><circle cx="2039.4" cy="992.84" r="2" fill="#3a3b43"/><circle cx="2048.5" cy="992.84" r="2" fill="#3a3b43"/></svg>
<svg style="left:2074px;top:981px;" width="20" height="22" viewBox="2074 981 20 22"><path d="M2080 985.94 L2087 992.84 L2080 999.74" fill="none" stroke="#3a3b43" stroke-width="2.2" stroke-linecap="square"/></svg>
<div class="b" style="left:700.5px;top:1041.25px;width:1421.65px;height:78.35px;border:1.5px solid #dcdce0;border-radius:20px;background:#fff"></div>
<div class="t" style="left:724.10px;top:1071.83px;font-size:19.53px;line-height:19.53px;letter-spacing:0.929px;color:#3a3b43;font-weight:400;-webkit-text-stroke:0.7px #3a3b43">Marek Veselý</div>
<div class="t" style="left:963.00px;top:1071.27px;font-size:17.60px;line-height:17.60px;letter-spacing:-0.024px;color:#52525b;font-weight:400;">marek.vesely@gmail.com</div>
<div class="t" style="left:1216.50px;top:1071.45px;font-size:17.62px;line-height:17.62px;letter-spacing:0.000px;color:#52525b;font-weight:400;letter-spacing:0.367px">+420 608 622 622</div>
<div class="b" style="left:1408.4px;top:1067.6px;width:94.2px;height:25.7px;border:1.6px solid #c7d2fe;border-radius:13px;background:#eef2ff"></div>
<div class="t" style="left:1417.60px;top:1074.27px;font-size:14.53px;line-height:14.53px;letter-spacing:0.876px;color:#4f46e5;font-weight:400;-webkit-text-stroke:0.55px #4f46e5">Pravidelný</div>
<div class="t" style="left:1551.30px;top:1071.33px;font-size:17.77px;line-height:17.77px;letter-spacing:0.000px;color:#52525b;font-weight:400;letter-spacing:-0.666px">24. 1. 2026, 11:00</div>
<div class="t" style="left:1719.50px;top:1071.33px;font-size:17.77px;line-height:17.77px;letter-spacing:0.000px;color:#52525b;font-weight:400;">8</div>
<svg style="left:1789px;top:1066px;" width="28" height="28" viewBox="1789 1066 28 28"><circle cx="1803.1" cy="1080.87" r="11.8" fill="#eef2ff" stroke="#c7d2fe" stroke-width="1.4"/><circle cx="1803.1" cy="1080.87" r="6.1" fill="#4f46e5"/><path d="M1800.4 1080.97 L1802.3 1082.77 L1805.8 1079.27" fill="none" stroke="#fff" stroke-width="1.4" stroke-linecap="round" stroke-linejoin="round"/></svg>
<svg style="left:2024px;top:1070px;" width="30" height="20" viewBox="2024 1070 30 20"><circle cx="2030.2" cy="1080.67" r="2" fill="#3a3b43"/><circle cx="2039.4" cy="1080.67" r="2" fill="#3a3b43"/><circle cx="2048.5" cy="1080.67" r="2" fill="#3a3b43"/></svg>
<svg style="left:2074px;top:1069px;" width="20" height="22" viewBox="2074 1069 20 22"><path d="M2080 1073.77 L2087 1080.67 L2080 1087.57" fill="none" stroke="#3a3b43" stroke-width="2.2" stroke-linecap="square"/></svg>
<div class="b" style="left:700.5px;top:1129.05px;width:1421.65px;height:78.35px;border:1.5px solid #dcdce0;border-radius:20px;background:#fff"></div>
<div class="t" style="left:724.10px;top:1159.66px;font-size:19.53px;line-height:19.53px;letter-spacing:0.665px;color:#3a3b43;font-weight:400;-webkit-text-stroke:0.7px #3a3b43">Peter Kováč</div>
<div class="t" style="left:963.00px;top:1159.10px;font-size:17.60px;line-height:17.60px;letter-spacing:0.046px;color:#52525b;font-weight:400;">peter.kovac@azet.sk</div>
<div class="t" style="left:1216.50px;top:1159.28px;font-size:17.62px;line-height:17.62px;letter-spacing:0.000px;color:#52525b;font-weight:400;letter-spacing:0.367px">+420 608 622 622</div>
<div class="b" style="left:1408.4px;top:1155.4px;width:94.2px;height:25.7px;border:1.6px solid #c7d2fe;border-radius:13px;background:#eef2ff"></div>
<div class="t" style="left:1417.60px;top:1162.10px;font-size:14.53px;line-height:14.53px;letter-spacing:0.876px;color:#4f46e5;font-weight:400;-webkit-text-stroke:0.55px #4f46e5">Pravidelný</div>
<div class="t" style="left:1551.30px;top:1159.16px;font-size:17.77px;line-height:17.77px;letter-spacing:0.000px;color:#52525b;font-weight:400;letter-spacing:-0.666px">24. 1. 2026, 11:00</div>
<div class="t" style="left:1719.50px;top:1159.16px;font-size:17.77px;line-height:17.77px;letter-spacing:0.000px;color:#52525b;font-weight:400;">8</div>
<svg style="left:1789px;top:1154px;" width="28" height="28" viewBox="1789 1154 28 28"><circle cx="1803.1" cy="1168.70" r="11.8" fill="#eef2ff" stroke="#c7d2fe" stroke-width="1.4"/><circle cx="1803.1" cy="1168.70" r="6.1" fill="#4f46e5"/><path d="M1800.4 1168.80 L1802.3 1170.60 L1805.8 1167.10" fill="none" stroke="#fff" stroke-width="1.4" stroke-linecap="round" stroke-linejoin="round"/></svg>
<svg style="left:2024px;top:1158px;" width="30" height="20" viewBox="2024 1158 30 20"><circle cx="2030.2" cy="1168.50" r="2" fill="#3a3b43"/><circle cx="2039.4" cy="1168.50" r="2" fill="#3a3b43"/><circle cx="2048.5" cy="1168.50" r="2" fill="#3a3b43"/></svg>
<svg style="left:2074px;top:1157px;" width="20" height="22" viewBox="2074 1157 20 22"><path d="M2080 1161.60 L2087 1168.50 L2080 1175.40" fill="none" stroke="#3a3b43" stroke-width="2.2" stroke-linecap="square"/></svg>
<div class="b" style="left:700.5px;top:1216.85px;width:1421.65px;height:78.35px;border:1.5px solid #dcdce0;border-radius:20px;background:#fff"></div>
<div class="t" style="left:724.10px;top:1247.49px;font-size:19.53px;line-height:19.53px;letter-spacing:0.639px;color:#3a3b43;font-weight:400;-webkit-text-stroke:0.7px #3a3b43">Lucia Ondrejková</div>
<div class="t" style="left:963.00px;top:1246.93px;font-size:17.60px;line-height:17.60px;letter-spacing:0.087px;color:#52525b;font-weight:400;">lucia.ondrejkova@gmail.com</div>
<div class="t" style="left:1216.50px;top:1247.11px;font-size:17.62px;line-height:17.62px;letter-spacing:0.000px;color:#52525b;font-weight:400;letter-spacing:0.367px">+420 608 622 622</div>
<div class="b" style="left:1408.4px;top:1243.2px;width:124.4px;height:25.7px;border:1.6px solid #fde68a;border-radius:13px;background:#fefce8"></div>
<div class="t" style="left:1417.60px;top:1249.93px;font-size:14.53px;line-height:14.53px;letter-spacing:1.000px;color:#a16207;font-weight:400;-webkit-text-stroke:0.55px #a16207">Problematický</div>
<div class="t" style="left:1551.30px;top:1246.99px;font-size:17.77px;line-height:17.77px;letter-spacing:0.000px;color:#52525b;font-weight:400;letter-spacing:-0.666px">24. 1. 2026, 11:00</div>
<div class="t" style="left:1719.50px;top:1246.99px;font-size:17.77px;line-height:17.77px;letter-spacing:0.000px;color:#52525b;font-weight:400;">8</div>
<svg style="left:1789px;top:1242px;" width="28" height="28" viewBox="1789 1242 28 28"><circle cx="1803.1" cy="1256.53" r="11.8" fill="#eef2ff" stroke="#c7d2fe" stroke-width="1.4"/><circle cx="1803.1" cy="1256.53" r="6.1" fill="#4f46e5"/><path d="M1800.4 1256.63 L1802.3 1258.43 L1805.8 1254.93" fill="none" stroke="#fff" stroke-width="1.4" stroke-linecap="round" stroke-linejoin="round"/></svg>
<svg style="left:2024px;top:1246px;" width="30" height="20" viewBox="2024 1246 30 20"><circle cx="2030.2" cy="1256.33" r="2" fill="#3a3b43"/><circle cx="2039.4" cy="1256.33" r="2" fill="#3a3b43"/><circle cx="2048.5" cy="1256.33" r="2" fill="#3a3b43"/></svg>
<svg style="left:2074px;top:1245px;" width="20" height="22" viewBox="2074 1245 20 22"><path d="M2080 1249.43 L2087 1256.33 L2080 1263.23" fill="none" stroke="#3a3b43" stroke-width="2.2" stroke-linecap="square"/></svg>
<div class="b" style="left:700.5px;top:1304.65px;width:1421.65px;height:78.35px;border:1.5px solid #dcdce0;border-radius:20px;background:#fff"></div>
<div class="t" style="left:725.10px;top:1335.32px;font-size:19.53px;line-height:19.53px;letter-spacing:0.632px;color:#3a3b43;font-weight:400;-webkit-text-stroke:0.7px #3a3b43">Tomáš Szabo</div>
<div class="t" style="left:964.00px;top:1334.76px;font-size:17.60px;line-height:17.60px;letter-spacing:0.084px;color:#52525b;font-weight:400;">tomas.szabo@gmail.com</div>
<div class="t" style="left:1216.50px;top:1334.94px;font-size:17.62px;line-height:17.62px;letter-spacing:0.000px;color:#52525b;font-weight:400;letter-spacing:0.367px">+420 608 622 622</div>
<div class="b" style="left:1408.4px;top:1331.1px;width:93.9px;height:25.7px;border:1.6px solid #fecdd3;border-radius:13px;background:#fff1f2"></div>
<div class="t" style="left:1417.60px;top:1337.76px;font-size:14.53px;line-height:14.53px;letter-spacing:0.598px;color:#e11d48;font-weight:400;-webkit-text-stroke:0.55px #e11d48">Blokovaný</div>
<div class="t" style="left:1551.30px;top:1334.82px;font-size:17.77px;line-height:17.77px;letter-spacing:0.000px;color:#52525b;font-weight:400;letter-spacing:-0.666px">24. 1. 2026, 11:00</div>
<div class="t" style="left:1719.50px;top:1334.82px;font-size:17.77px;line-height:17.77px;letter-spacing:0.000px;color:#52525b;font-weight:400;">8</div>
<svg style="left:1789px;top:1330px;" width="28" height="28" viewBox="1789 1330 28 28"><circle cx="1803.1" cy="1344.36" r="11.8" fill="#eef2ff" stroke="#c7d2fe" stroke-width="1.4"/><circle cx="1803.1" cy="1344.36" r="6.1" fill="#4f46e5"/><path d="M1800.4 1344.46 L1802.3 1346.26 L1805.8 1342.76" fill="none" stroke="#fff" stroke-width="1.4" stroke-linecap="round" stroke-linejoin="round"/></svg>
<svg style="left:2024px;top:1334px;" width="30" height="20" viewBox="2024 1334 30 20"><circle cx="2030.2" cy="1344.16" r="2" fill="#3a3b43"/><circle cx="2039.4" cy="1344.16" r="2" fill="#3a3b43"/><circle cx="2048.5" cy="1344.16" r="2" fill="#3a3b43"/></svg>
<svg style="left:2074px;top:1333px;" width="20" height="22" viewBox="2074 1333 20 22"><path d="M2080 1337.26 L2087 1344.16 L2080 1351.06" fill="none" stroke="#3a3b43" stroke-width="2.2" stroke-linecap="square"/></svg>
</div></body></html>
